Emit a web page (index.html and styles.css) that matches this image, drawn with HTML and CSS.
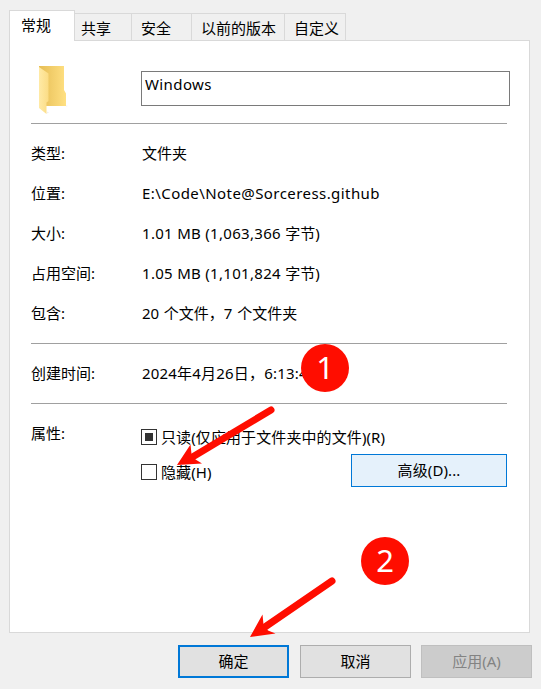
FILE: index.html
```
<!DOCTYPE html>
<html lang="zh-CN">
<head>
<meta charset="utf-8">
<title>Windows 属性</title>
<link rel="stylesheet" href="styles.css">
</head>
<body>
<main class="dialog">
  <nav class="tabs">
    <div class="tab tab-active">常规</div>
    <div class="tab tab-share">共享</div>
    <div class="tab tab-security">安全</div>
    <div class="tab tab-versions">以前的版本</div>
    <div class="tab tab-custom">自定义</div>
  </nav>
  <section class="panel">
    <header class="name-row">
      <svg class="folder" width="30" height="50" viewBox="0 0 30 50">
        <defs>
          <linearGradient id="back"><stop offset="0" stop-color="#e6bd55"/><stop offset="1" stop-color="#ffe082"/></linearGradient>
          <linearGradient id="front"><stop offset="0" stop-color="#ffeaa6"/><stop offset="1" stop-color="#fbdc85"/></linearGradient>
        </defs>
        <path d="M0 0H25V24L27 27.500V40H0Z" fill="url(#back)"/>
        <path d="M0 1L9.500 7.500V35L7.500 36.500V48L0 42Z" fill="url(#front)"/>
        <path d="M8 45.500L10 46.500L8 47.500ZM27 39.500L29 40L27 40.500Z" fill="#eee"/>
      </svg>
      <div class="name-box">Windows</div>
    </header>
    <dl class="group">
      <div class="row"><dt>类型:</dt><dd>文件夹</dd></div>
      <div class="row"><dt>位置:</dt><dd class="path">E:\Code\Note@Sorceress.github</dd></div>
      <div class="row"><dt>大小:</dt><dd><span class="size">1.01 MB (1,063,366 </span>字节)</dd></div>
      <div class="row"><dt>占用空间:</dt><dd><span class="size">1.05 MB (1,101,824 </span>字节)</dd></div>
      <div class="row"><dt>包含:</dt><dd class="contents">20 个文件，7 个文件夹</dd></div>
    </dl>
    <dl class="group">
      <div class="row"><dt>创建时间:</dt><dd class="date">2024年4月26日，6:13:4</dd></div>
    </dl>
    <div class="group attributes">
      <div class="attr-label">属性:</div>
      <div class="attr-body">
        <div class="check"><span class="box mixed"></span>只读(仅应用于文件夹中的文件)(R)</div>
        <div class="attr-line">
          <div class="check"><span class="box"></span>隐藏(H)</div>
          <div class="button advanced">高级(D)...</div>
        </div>
      </div>
    </div>
  </section>
  <footer class="actions">
    <div class="button primary">确定</div>
    <div class="button">取消</div>
    <div class="button disabled">应用(A)</div>
  </footer>
  <svg class="arrows" width="541" height="689" viewBox="0 0 541 689">
    <path class="shaft" d="M271 410L190 458.500M332 581L262 629"/>
    <path class="head" d="M177 465L190.500 444.500L191.500 454L195.500 459.500L202 463.500Z"/>
    <path class="head" d="M250 637L262.500 614.500L263.500 624.500L268 630.500L275.500 633.500Z"/>
  </svg>
  <div class="step step-one">1</div>
  <div class="step step-two">2</div>
</main>
</body>
</html>
```
FILE: styles.css
```
* { box-sizing: border-box; }
body {
  margin: 0;
  background: #f0f0f0;
  color: #000;
  font: 15px/20px "Noto Sans", "Noto Sans CJK SC", sans-serif;
}
.dialog {
  position: relative;
  width: 541px;
  height: 689px;
  padding: 10px 9px 0 9px;
  overflow: hidden;
}
.tabs { display: flex; align-items: flex-end; height: 31px; }
.tab {
  height: 28px;
  padding-top: 4px;
  border: 1px solid #d9d9d9;
  border-left: 0;
  white-space: nowrap;
  padding-left: 9px;
}
.tab-active {
  position: relative;
  width: 66px;
  height: 31px;
  padding: 4px 0 0 11px;
  border-left: 1px solid #d9d9d9;
  border-bottom: 0;
  background: #fff;
}
.tab-share { width: 57px; padding-left: 6px; }
.tab-security { width: 60px; }
.tab-versions { width: 93px; }
.tab-custom { width: 61px; }
.panel {
  width: 521px;
  height: 593px;
  margin-top: -1px;
  padding: 25px 19px 0 21px;
  border: 1px solid #d9d9d9;
  background: #fff;
}
.name-row { display: flex; align-items: flex-start; height: 57px; }
.folder { margin-left: 8px; flex: none; }
.name-box {
  width: 369px;
  height: 35px;
  margin: 5px 0 0 72px;
  padding: 2px 3px;
  border: 1px solid #7a7a7a;
  letter-spacing: .4px;
}
.group { width: 476px; margin: 0; padding: 10px 0; border-top: 1px solid #a0a0a0; }
.row { display: flex; height: 40px; padding-top: 9px; white-space: nowrap; }
dl.group .row:last-child { height: 39px; }
dt { width: 111px; }
dd { margin: 0; }
.path { letter-spacing: .43px; }
.size { letter-spacing: .3px; }
.contents { word-spacing: .8px; }
.date { letter-spacing: .2px; }
.attributes { display: flex; padding-top: 19px; }
.attr-label { width: 110px; }
.attr-body { width: 366px; padding-top: 3px; }
.check { display: flex; align-items: center; gap: 4px; height: 22px; white-space: nowrap; letter-spacing: .1px; }
.box { width: 16px; height: 16px; border: 1px solid #333; background: #fff; }
.mixed { padding: 3px; background: #333 content-box; }
.attr-line { display: flex; justify-content: space-between; padding-top: 6px; }
.attr-line .check { margin-top: 7px; }
.button {
  display: flex;
  align-items: center;
  justify-content: center;
  width: 111px;
  height: 33px;
  padding-bottom: 2px;
  border: 1px solid #adadad;
  background: #e1e1e1;
}
.advanced { width: 156px; border-color: #0078d7; background: #e5f1fb; letter-spacing: .1px; }
.actions { display: flex; padding: 12px 0 0 169px; gap: 11px; }
.primary { border: 2px solid #0078d7; }
.disabled { margin-left: -1px; border-color: #bfbfbf; background: #ccc; color: #838383; }
.arrows { position: absolute; left: 0; top: 0; }
.shaft { stroke: #ff0d00; stroke-width: 7; stroke-linecap: round; }
.head { fill: #ff0d00; }
.step {
  position: absolute;
  width: 48px;
  height: 48px;
  border-radius: 50%;
  background: #ff0d00;
  color: #fff;
  font-size: 31px;
  line-height: 47px;
  text-align: center;
}
.step-one { left: 301px; top: 344px; }
.step-two { left: 361px; top: 537px; }
```
